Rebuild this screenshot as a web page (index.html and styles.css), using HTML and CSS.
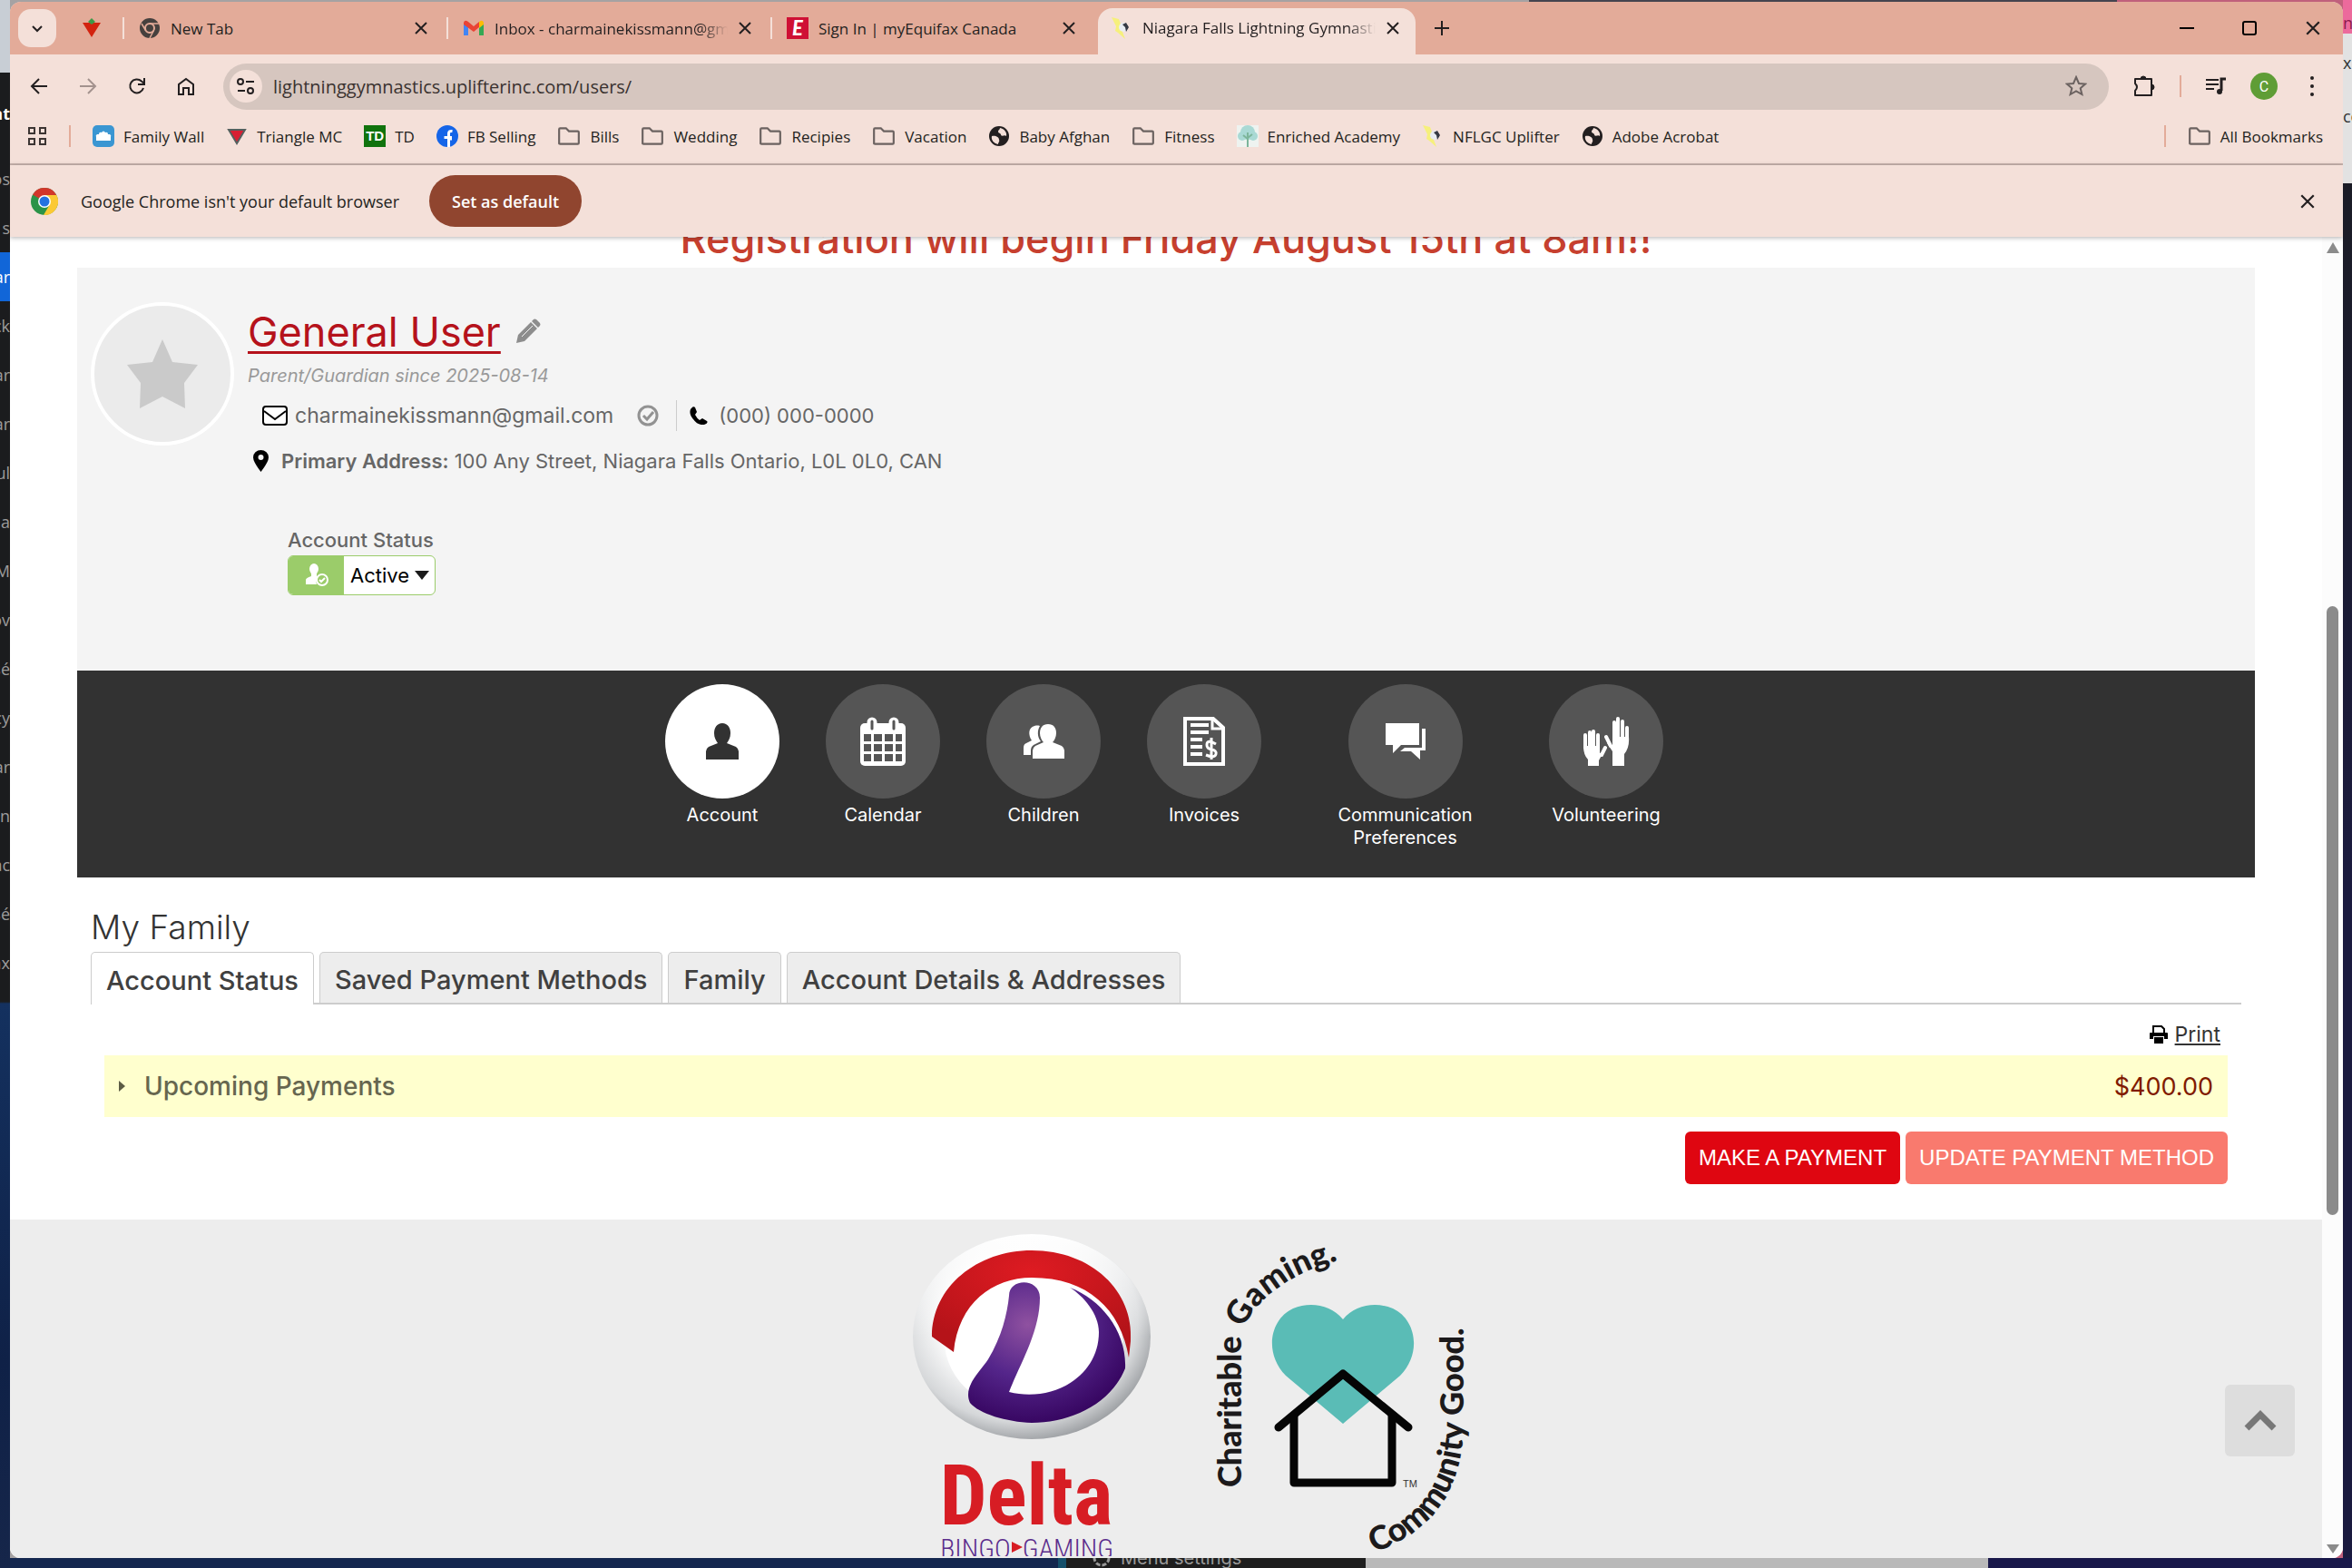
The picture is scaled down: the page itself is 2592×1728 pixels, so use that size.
FILE: index.html
```html
<!DOCTYPE html>
<html lang="en">
<head>
<meta charset="UTF-8" />
<meta name="viewport" content="width=device-width, initial-scale=1" />
<title>Niagara Falls Lightning Gymnastics</title>
<link rel="stylesheet" href="styles.css">
</head>
<body>

<!-- shared icons -->
<svg class="defs" aria-hidden="true">
  <symbol id="x" viewBox="0 0 16 16"><path d="M2 2l12 12M14 2L2 14" fill="none" stroke="currentColor" stroke-width="2"/></symbol>
  <symbol id="folder" viewBox="0 0 24 24"><path d="M2 20V5q0-1 1-1h6l3 3h9q1 0 1 1v11q0 1-1 1H3q-1 0-1-1z" fill="none" stroke="#6b6260" stroke-width="2"/></symbol>
  <symbol id="globe" viewBox="0 0 24 24"><circle cx="12" cy="12" r="11" fill="#231f20"/><path d="M13 3c5 1 8 5 7 9-2-2-4 1-6-1 1-2-3-2-3-4s2-2 2-4zM4 12c4-1 8 1 8 4 1 2-1 3-1 5-5-1-8-5-7-9z" fill="#f4e0d9"/></symbol>
  <symbol id="bolt" viewBox="0 0 24 24"><path d="M1 0l8 2 3 8 3 2-2 4 3 8-8-7-3-2 1-5z" fill="#f6f07c"/><circle cx="14" cy="11" r="5" fill="#e9edf2"/><path d="M13 8l4-2 3 5-3 5-1-5z" fill="#363a44"/></symbol>
</svg>

<div class="behind behind-left" aria-hidden="true">
  <div class="side-head"></div>
  <div class="side-item bold">at</div>
  <div class="side-item">os</div>
  <div class="side-item">s</div>
  <div class="side-item on">ar</div>
  <div class="side-item">ck</div>
  <div class="side-item">ar</div>
  <div class="side-item">ar</div>
  <div class="side-item">ul</div>
  <div class="side-item">a</div>
  <div class="side-item">M</div>
  <div class="side-item">ov</div>
  <div class="side-item">sé</div>
  <div class="side-item">cy</div>
  <div class="side-item">ar</div>
  <div class="side-item">n</div>
  <div class="side-item">ac</div>
  <div class="side-item">sé</div>
  <div class="side-item">ax</div>
</div>
<div class="behind behind-right" aria-hidden="true">
  <div class="peek-pink">nk</div>
  <div class="peek-tab">x</div>
  <div class="peek-url">co</div>
</div>
<div class="behind behind-bottom" aria-hidden="true">
  <div class="menu-peek">
    <svg width="22" height="22" viewBox="0 0 22 22"><circle cx="11" cy="11" r="8" fill="none" stroke="#999" stroke-width="3" stroke-dasharray="5 2"/></svg>
    Menu settings
  </div>
  <div class="grey-peek"></div>
</div>

<div class="window">

  <!-- TAB STRIP -->
  <div class="tab-strip">
    <button class="tab-search" aria-label="Search tabs"><svg width="14" height="14" viewBox="0 0 14 14"><path d="M2 5l5 5 5-5" fill="none" stroke="#231f20" stroke-width="2"/></svg></button>
    <div class="pinned">
      <svg width="24" height="24" viewBox="0 0 24 24"><path d="M2 6h20L12 22z" fill="#d3230f"/><path d="M8 5l4-4 4 4-4 3z" fill="#3c9b48"/></svg>
    </div>
    <div class="tab">
      <svg width="24" height="24" viewBox="0 0 24 24"><circle cx="12" cy="12" r="11" fill="#46403e"/><circle cx="12" cy="12" r="5" fill="none" stroke="#e3ab99" stroke-width="2"/><path d="M12 7h10M7.500 14.500L3 7M16.500 14.500L12 23" stroke="#e3ab99" stroke-width="1.500"/></svg>
      <span class="tab-title">New Tab</span>
      <button class="plain" aria-label="Close tab"><svg width="16" height="16"><use href="#x"/></svg></button>
    </div>
    <div class="tab">
      <svg width="24" height="24" viewBox="0 0 24 24"><path d="M1 20V6l5 4v10z" fill="#4285f4"/><path d="M18 20V10l5-4v14z" fill="#34a853"/><path d="M1 6q1-4 5-1l6 5 6-5v6l-6 5-11-8z" fill="#ea4335"/><path d="M18 5q4-3 5 1v2l-5 4z" fill="#fbbc04"/></svg>
      <span class="tab-title fade">Inbox - charmainekissmann@gmail.com</span>
      <button class="plain" aria-label="Close tab"><svg width="16" height="16"><use href="#x"/></svg></button>
    </div>
    <div class="tab">
      <span class="equifax">E</span>
      <span class="tab-title">Sign In | myEquifax Canada</span>
      <button class="plain" aria-label="Close tab"><svg width="16" height="16"><use href="#x"/></svg></button>
    </div>
    <div class="tab active">
      <svg width="24" height="24"><use href="#bolt"/></svg>
      <span class="tab-title fade">Niagara Falls Lightning Gymnastics</span>
      <button class="plain" aria-label="Close tab"><svg width="16" height="16"><use href="#x"/></svg></button>
    </div>
    <button class="plain new-tab" aria-label="New tab"><svg width="18" height="18" viewBox="0 0 18 18"><path d="M9 1v16M1 9h16" stroke="#231f20" stroke-width="2"/></svg></button>
    <div class="win-buttons">
      <button class="plain" aria-label="Minimize"><svg width="16" height="16" viewBox="0 0 16 16"><path d="M0 8h16" stroke="#000" stroke-width="2"/></svg></button>
      <button class="plain" aria-label="Maximize"><svg width="16" height="16" viewBox="0 0 16 16"><rect x="1" y="1" width="14" height="14" rx="2" fill="none" stroke="#000" stroke-width="2"/></svg></button>
      <button class="plain" aria-label="Close"><svg width="18" height="18"><use href="#x"/></svg></button>
    </div>
  </div>

  <!-- TOOLBAR -->
  <div class="toolbar">
    <div class="nav-buttons">
      <button class="plain" aria-label="Back"><svg width="20" height="20" viewBox="0 0 20 20"><path d="M19 10H2M10 2l-8 8 8 8" fill="none" stroke="#231f20" stroke-width="2"/></svg></button>
      <button class="plain" aria-label="Forward"><svg width="20" height="20" viewBox="0 0 20 20"><path d="M1 10h17M10 2l8 8-8 8" fill="none" stroke="#a3928e" stroke-width="2"/></svg></button>
      <button class="plain" aria-label="Reload"><svg width="20" height="20" viewBox="0 0 20 20"><path d="M17 12a7.500 7.500 0 1 1-2-7.500L18 7" fill="none" stroke="#231f20" stroke-width="2"/><path d="M18 1v7h-7" fill="none" stroke="#231f20" stroke-width="2"/></svg></button>
      <button class="plain" aria-label="Home"><svg width="20" height="20" viewBox="0 0 20 20"><path d="M2 19V8l8-6 8 6v11h-5v-7H7v7z" fill="none" stroke="#231f20" stroke-width="2"/></svg></button>
    </div>
    <div class="omnibox">
      <button class="site-info" aria-label="Site information"><svg width="20" height="20" viewBox="0 0 20 20"><g fill="none" stroke="#231f20" stroke-width="2"><circle cx="4" cy="5" r="3"/><path d="M10 5h9M1 15h8"/><circle cx="15" cy="15" r="3"/></g></svg></button>
      <input class="url" type="text" aria-label="Address" value="lightninggymnastics.uplifterinc.com/users/" />
      <button class="plain" aria-label="Bookmark"><svg width="24" height="24" viewBox="0 0 24 24"><path d="M12 2l3 7 7 .6-5.300 4.700L18.400 21 12 17.300 5.600 21l1.700-6.700L2 9.600 9 9z" fill="none" stroke="#6b6260" stroke-width="2"/></svg></button>
    </div>
    <button class="plain" aria-label="Extensions"><svg width="26" height="26" viewBox="0 0 26 26"><path d="M3 5h18v18H3v-5q4-4 0-8z" fill="none" stroke="#231f20" stroke-width="2" stroke-linejoin="round"/><path d="M9 5a3 3 0 0 1 6 0zM21 11a3 3 0 0 1 0 6z" fill="#231f20" stroke="#231f20"/></svg></button>
    <span class="sep"></span>
    <button class="plain" aria-label="Media controls"><svg width="24" height="24" viewBox="0 0 24 24"><path d="M1 5h14M1 10h14M1 15h9" stroke="#231f20" stroke-width="2"/><path d="M18 17V4h5" fill="none" stroke="#231f20" stroke-width="3"/><circle cx="16" cy="18" r="3" fill="#231f20"/></svg></button>
    <button class="profile-dot" aria-label="Profile">C</button>
    <button class="plain" aria-label="Menu"><svg width="24" height="24" viewBox="0 0 24 24"><g fill="#231f20"><circle cx="12" cy="3" r="2"/><circle cx="12" cy="12" r="2"/><circle cx="12" cy="21" r="2"/></g></svg></button>
  </div>

  <!-- BOOKMARKS -->
  <div class="bookmarks">
    <svg class="apps" width="22" height="22" viewBox="0 0 22 22"><path d="M2 2h6v6H2zM14 2h6v6h-6zM2 14h6v6H2zM14 14h6v6h-6z" fill="none" stroke="#3c3533" stroke-width="2"/></svg>
    <span class="sep"></span>
    <a href="#"><svg width="24" height="24" viewBox="0 0 24 24"><rect width="24" height="24" rx="5" fill="#3a96d2"/><path d="M4 17v-4q-1-2 1-3h2q0-3 3-2 2-3 4 0 3-1 3 2h2q2 1 1 3v4z" fill="#fff"/></svg>Family Wall</a>
    <a href="#"><svg width="24" height="24" viewBox="0 0 24 24"><path d="M3 5h18L12 20z" fill="#d81f33" stroke="#55605f" stroke-width="2"/></svg>Triangle MC</a>
    <a href="#"><span class="td">TD</span>TD</a>
    <a href="#"><svg width="24" height="24" viewBox="0 0 24 24"><circle cx="12" cy="12" r="12" fill="#1565e8"/><path d="M13.500 24v-9H17M8.500 13.500H17M13.500 15V9q0-3 4-2.500" fill="none" stroke="#fff" stroke-width="3"/></svg>FB Selling</a>
    <a href="#"><svg width="26" height="26"><use href="#folder"/></svg>Bills</a>
    <a href="#"><svg width="26" height="26"><use href="#folder"/></svg>Wedding</a>
    <a href="#"><svg width="26" height="26"><use href="#folder"/></svg>Recipies</a>
    <a href="#"><svg width="26" height="26"><use href="#folder"/></svg>Vacation</a>
    <a href="#"><svg width="24" height="24"><use href="#globe"/></svg>Baby Afghan</a>
    <a href="#"><svg width="26" height="26"><use href="#folder"/></svg>Fitness</a>
    <a href="#"><svg width="24" height="24" viewBox="0 0 24 24"><rect width="24" height="24" fill="#eef3f0"/><circle cx="12" cy="8" r="8" fill="#a9d9d4"/><circle cx="6" cy="12" r="5" fill="#a9d9d4"/><circle cx="18" cy="12" r="5" fill="#a9d9d4"/><path d="M12 24V8M12 15l-5-4M12 14l5-4" stroke="#7cb59a" stroke-width="2"/></svg>Enriched Academy</a>
    <a href="#"><svg width="24" height="24"><use href="#bolt"/></svg>NFLGC Uplifter</a>
    <a href="#"><svg width="24" height="24"><use href="#globe"/></svg>Adobe Acrobat</a>
    <span class="sep push"></span>
    <a href="#"><svg width="26" height="26"><use href="#folder"/></svg>All Bookmarks</a>
  </div>

  <!-- DEFAULT BROWSER BAR -->
  <div class="infobar">
    <svg width="30" height="30" viewBox="0 0 30 30"><circle cx="15" cy="15" r="15" fill="#2b9348"/><path d="M15 15L2 7.500A15 15 0 0 1 28 7.500z" fill="#d2362b"/><path d="M15 8h13.300A15 15 0 0 1 14 30l7-12z" fill="#fbc934"/><circle cx="15" cy="15" r="7" fill="#fff"/><circle cx="15" cy="15" r="5.500" fill="#2472e0"/></svg>
    <span>Google Chrome isn't your default browser</span>
    <button class="set-default">Set as default</button>
    <button class="plain push" aria-label="Dismiss"><svg width="18" height="18"><use href="#x"/></svg></button>
  </div>

  <!-- PAGE -->
  <div class="viewport">
    <main class="page">
      <div class="container">
        <h2 class="notice">Registration will begin Friday August 15th at 8am!!</h2>

        <section class="profile">
          <div class="avatar"><svg width="80" height="76" viewBox="0 0 80 76"><path d="M40 0l11 25 28 3-15 20 1 28-25-13-25 13 1-28L1 28l28-3z" fill="#cacaca"/></svg></div>
          <div class="profile-info">
            <div class="name-row">
              <a class="name" href="#">General User</a>
              <svg width="28" height="28" viewBox="0 0 28 28"><path d="M1 27l2-9L17 4l7 7-14 14zM18 3l2-2q1-1 3 0l4 4q1 2 0 3l-2 2z" fill="#8d8d8d"/><path d="M7 20L19 8" stroke="#f4f4f4" stroke-width="1"/></svg>
            </div>
            <div class="since">Parent/Guardian since 2025-08-14</div>
            <div class="contact">
              <svg width="28" height="22" viewBox="0 0 28 22"><rect x="1" y="1" width="26" height="20" rx="3" fill="#fff" stroke="#000" stroke-width="2"/><path d="M2 6l12 9 12-9" fill="none" stroke="#000" stroke-width="2"/></svg>
              <span class="email">charmainekissmann@gmail.com</span>
              <svg class="verified" width="24" height="24" viewBox="0 0 24 24"><circle cx="12" cy="12" r="10" fill="none" stroke="#929292" stroke-width="3"/><path d="M7 12l4 4 7-8" fill="none" stroke="#929292" stroke-width="3"/></svg>
              <span class="phone"><svg width="20" height="20" viewBox="0 0 20 20"><path d="M1 3q3-4 5-2l2 5-2 3q2 4 5 6l3-2 5 3q2 2-3 4Q9 21 4 14-1 8 1 3z" fill="#000"/></svg>(000) 000-0000</span>
            </div>
            <div class="address">
              <svg width="17" height="24" viewBox="0 0 17 24"><path fill-rule="evenodd" d="M8.500 24Q0 13 0 8a8.500 8 0 0 1 17 0q0 5-8.500 16zM8.500 5a3 3 0 1 0 0 6 3 3 0 0 0 0-6z" fill="#000"/></svg>
              <span><b>Primary Address:</b> 100 Any Street, Niagara Falls Ontario, L0L 0L0, CAN</span>
            </div>
            <div class="status">
              <label for="accountStatus">Account Status</label>
              <div class="status-box">
                <span class="status-icon"><svg width="26" height="26" viewBox="0 0 26 26"><ellipse cx="10" cy="6" rx="5" ry="6" fill="#fff"/><path d="M7 9h6v5l3 2q-5 3-3 7H1v-5q0-2 6-4z" fill="#fff"/><circle cx="19" cy="18" r="6" fill="#9bcc6a" stroke="#fff" stroke-width="2"/><path d="M16 18l2 2 4-4" fill="none" stroke="#fff" stroke-width="2"/></svg></span>
                <select id="accountStatus"><option>Active</option></select>
                <svg class="caret" width="16" height="10" viewBox="0 0 16 10"><path d="M0 0h16L8 10z" fill="#1b1b1b"/></svg>
              </div>
            </div>
          </div>
        </section>

        <nav class="user-nav">
          <a class="active" href="#"><span class="disc"><svg width="38" height="40" viewBox="0 0 38 40"><path d="M19 0c6 0 9 5 9 11 0 5-2 8-4 11l10 4q3 2 3 5v9H1v-9q0-3 3-5l10-4c-2-3-4-6-4-11C10 5 13 0 19 0z" fill="currentColor"/></svg></span>Account</a>
          <a href="#"><span class="disc"><svg width="52" height="54" viewBox="0 0 52 54"><rect x="1" y="7" width="50" height="47" rx="5" fill="currentColor"/><path d="M14 6v8M38 6v8" stroke="currentColor" stroke-width="11" stroke-linecap="round"/><path d="M14 5v8M38 5v8" stroke="#555" stroke-width="3" stroke-linecap="round"/><path d="M5 19h8v8H5zm11 0h9v8h-9zm12 0h9v8h-9zm12 0h7v8h-7zM5 30h8v8H5zm11 0h9v8h-9zm12 0h9v8h-9zm12 0h7v8h-7zM5 41h8v8H5zm11 0h9v8h-9zm12 0h9v8h-9zm12 0h7v8h-7z" fill="#555"/></svg></span>Calendar</a>
          <a href="#"><span class="disc"><svg width="46" height="40" viewBox="0 0 46 40"><path d="M13 3c4-1 6 0 6 0-3 5-3 12 1 17l-8 4q-3 2-3 6v5H1v-8q0-4 3-5l6-3C6 13 6 5 13 3z" fill="currentColor"/><path d="M28 1c6 0 9 4 9 10 0 4-2 8-4 10l10 4q3 2 3 5v9H11v-9q0-3 3-5l9-4c-2-2-4-6-4-10 0-6 3-10 9-10z" fill="currentColor"/></svg></span>Children</a>
          <a href="#"><span class="disc"><svg width="46" height="54" viewBox="0 0 46 54"><path d="M2 2h31l11 10v40H2z" fill="none" stroke="currentColor" stroke-width="4"/><path d="M32 2v11h12" fill="none" stroke="currentColor" stroke-width="3"/><path d="M8 9h20M8 17h20M8 25h13M8 33h13M8 41h13" stroke="currentColor" stroke-width="4"/><path d="M36 30q-10-6-10 1 0 4 5 5 6 1 5 5-1 5-11 1M31 23v24" fill="none" stroke="currentColor" stroke-width="3"/></svg></span>Invoices</a>
          <a class="wide" href="#"><span class="disc"><svg width="46" height="40" viewBox="0 0 46 40"><path d="M1 0h37v24H18L9 33v-9H1z" fill="currentColor"/><path d="M41 6h4v24h-6v10L29 31H17l5-4h19z" fill="currentColor"/></svg></span>Communication<br>Preferences</a>
          <a href="#"><span class="disc"><svg width="52" height="54" viewBox="0 0 52 54"><g stroke="currentColor" stroke-width="4" stroke-linecap="round"><path d="M3 34V20M8 33V17M12 33V16M17 34V20M21 42l4-8M35 24V6M39 24V2M44 24V5M49 26V12M31 32l-5-10"/></g><path d="M1 32h18v8l4-1-5 9v6H6v-7q-5-5-5-15zM33 22h18q1 12-5 19v13H33V38l-6-9 6 2z" fill="currentColor"/></svg></span>Volunteering</a>
        </nav>

        <section class="family">
          <h1>My Family</h1>
          <div class="tabs" role="tablist">
            <button class="active" role="tab" aria-selected="true">Account Status</button>
            <button role="tab">Saved Payment Methods</button>
            <button role="tab">Family</button>
            <button role="tab">Account Details &amp; Addresses</button>
          </div>
          <div class="panel">
            <div class="print">
              <svg width="20" height="20" viewBox="0 0 20 20"><path d="M4 8V1h9l3 3v4" fill="#fff" stroke="#000" stroke-width="2"/><path d="M1 8h18q1 0 1 1v6h-4v-3H4v3H0V9q0-1 1-1z" fill="#000"/><rect x="5" y="13" width="10" height="7" fill="#000"/></svg>
              <a href="#">Print</a>
            </div>
            <button class="payments">
              <svg width="7" height="12" viewBox="0 0 7 12"><path d="M0 0l7 6-7 6z" fill="#5c5c44"/></svg>
              <span>Upcoming Payments</span>
              <span class="amount">$400.00</span>
            </button>
            <div class="actions">
              <button class="pay">MAKE A PAYMENT</button>
              <button class="update">UPDATE PAYMENT METHOD</button>
            </div>
          </div>
        </section>
      </div>

      <footer class="sponsors">
        <svg width="275" height="371" viewBox="1000 1346 275 371" role="img" aria-label="Delta Bingo and Gaming">
          <defs>
            <radialGradient id="ball" cx=".45" cy=".42" r=".62"><stop offset=".5" stop-color="#fff"/><stop offset=".8" stop-color="#d5d7d9"/><stop offset="1" stop-color="#8f9296"/></radialGradient>
            <linearGradient id="shade" x1="0" y1="0" x2="0" y2="1"><stop offset="0" stop-color="#fff"/><stop offset=".5" stop-color="#fff" stop-opacity="0"/></linearGradient>
            <radialGradient id="dfill" cx=".38" cy=".3" r=".75"><stop offset="0" stop-color="#8f51a0"/><stop offset=".5" stop-color="#54258a"/><stop offset="1" stop-color="#33025c"/></radialGradient>
            <radialGradient id="rfill" cx=".5" cy=".2" r=".7"><stop offset="0" stop-color="#de1b22"/><stop offset="1" stop-color="#b51319"/></radialGradient>
          </defs>
          <ellipse cx="1138" cy="1475" rx="131" ry="113" fill="url(#ball)"/>
          <ellipse cx="1138" cy="1475" rx="131" ry="113" fill="url(#shade)"/>
          <ellipse cx="1140" cy="1480" rx="98" ry="80" fill="#fff"/>
          <path d="M1028 1475C1028 1420 1078 1380 1138 1380C1204 1380 1251 1425 1247 1480L1245 1498C1236 1445 1200 1410 1138 1410C1095 1410 1057 1438 1052 1492Z" fill="url(#rfill)"/>
          <path d="M1113 1430C1113 1410 1147 1410 1147 1432C1147 1470 1125 1505 1113 1536C1160 1548 1212 1520 1212 1470C1212 1450 1195 1430 1180 1421C1215 1434 1243 1470 1241 1510C1225 1550 1180 1570 1138 1570C1110 1569 1080 1560 1070 1548C1062 1530 1080 1515 1090 1500C1105 1475 1111 1450 1113 1430Z" fill="url(#dfill)"/>
          <text class="delta" x="1132" y="1682" text-anchor="middle">Delta</text>
          <text class="bingo" x="1076" y="1719" text-anchor="middle">BINGO</text>
          <path d="M1116 1701l12 6-12 6z" fill="#d71d24"/>
          <text class="bingo" x="1178" y="1719" text-anchor="middle">GAMING</text>
        </svg>
        <svg width="310" height="371" viewBox="1325 1346 310 371" role="img" aria-label="Charitable Gaming. Community Good.">
          <path id="arcLeft" d="M1369 1641V1480C1371 1445 1418 1402 1490 1388" fill="none"/>
          <path id="arcRight" d="M1515 1713C1582 1690 1614 1640 1614 1570V1440" fill="none"/>
          <path d="M1481 1571L1418 1518C1394 1494 1400 1456 1426 1444C1445 1436 1468 1440 1481 1456C1494 1440 1517 1436 1536 1444C1562 1456 1568 1494 1544 1518Z" fill="#5abcb6"/>
          <path d="M1410 1575L1481 1516L1553 1575" fill="none" stroke="#050505" stroke-width="9" stroke-linecap="round" stroke-linejoin="round"/>
          <path d="M1427 1562V1636H1535V1562" fill="none" stroke="#050505" stroke-width="9" stroke-linejoin="round"/>
          <text class="tm" x="1547" y="1641">TM</text>
          <text class="arc"><textPath href="#arcLeft">Charitable Gaming.</textPath></text>
          <text class="arc"><textPath href="#arcRight">Community Good.</textPath></text>
        </svg>
      </footer>
      <button class="to-top" aria-label="Back to top"><svg width="36" height="24" viewBox="0 0 36 24"><path d="M3 20L18 5l15 15" fill="none" stroke="#777" stroke-width="7"/></svg></button>
    </main>
    <div class="scrollbar">
      <svg width="14" height="12" viewBox="0 0 14 12"><path d="M7 0l7 12H0z" fill="#8b8b8b"/></svg>
      <div class="track"><div class="thumb"></div></div>
      <svg width="14" height="10" viewBox="0 0 14 10"><path d="M0 0h14L7 10z" fill="#8b8b8b"/></svg>
    </div>
  </div>
</div>

</body>
</html>
```
FILE: styles.css
```css
:root {
  --strip: #e3ab99;
  --bar: #f4e0d9;
  --ink: #231f20;
}
* {
  box-sizing: border-box;
  margin: 0;
  padding: 0;
}
body {
  height: 100vh;
  overflow: hidden;
  display: grid;
  grid-template-columns: 11px 1fr 10px;
  grid-template-rows: 2px 1fr 11px;
  background: linear-gradient(to right, #a5a2a3 65%, #45444f 65%, #45444f 90%, #c0607c 90%);
  font-family: Inter, "Liberation Sans", sans-serif;
}
button, input, select {
  font: inherit;
  border: none;
  background: none;
}
button {
  cursor: pointer;
}
svg {
  display: block;
  flex-shrink: 0;
}
.defs {
  position: absolute;
  width: 0;
  height: 0;
}
.push {
  margin-left: auto;
}

/* WINDOWS BEHIND */
.behind {
  overflow: hidden;
}
.behind-left {
  grid-row: 1 / 4;
  grid-column: 1;
  background: linear-gradient(to bottom, #1b1c1e 1104px, #14315f 1106px, #0f2147 1500px, #16264a);
  color: #9b9b9b;
  font: 18px "Open Sans", sans-serif;
}
.side-head {
  height: 80px;
  background: #c8ced5;
}
.side-item {
  height: 54px;
  display: flex;
  align-items: center;
  justify-content: flex-end;
}
.side-item.bold {
  height: 90px;
  color: #fff;
  font-weight: 700;
}
.side-item.on {
  background: #1166d8;
  color: #fff;
}
.behind-right {
  grid-row: 1 / 3;
  grid-column: 3;
  background: linear-gradient(to bottom, #ec6a9c 37px, #e2e2e2 37px, #e2e2e2 202px, #1b1c26 202px, #1a1a3f 1000px);
  color: #333;
  font: 18px "Open Sans", sans-serif;
}
.peek-pink {
  height: 48px;
  line-height: 50px;
  color: #8c1c4c;
}
.peek-tab {
  height: 48px;
  line-height: 42px;
}
.peek-url {
  height: 68px;
  line-height: 64px;
}
.behind-bottom {
  grid-row: 3;
  grid-column: 2 / 4;
  display: flex;
  padding-left: 1164px;
  background: linear-gradient(to right, #14274f 1155px, #15506b 1155px, #15506b 1164px, #19184a 1164px);
}
.menu-peek {
  width: 330px;
  height: 11px;
  padding-left: 28px;
  display: flex;
  align-items: flex-end;
  gap: 10px;
  background: #1e1e1e;
  color: #999;
  font-size: 20px;
  line-height: 22px;
}
.grey-peek {
  width: 686px;
  background: #b9b9b9;
}

/* BROWSER WINDOW */
.window {
  grid-row: 2;
  grid-column: 2;
  min-width: 0;
  min-height: 0;
  display: flex;
  flex-direction: column;
  background: var(--bar);
  border-radius: 12px;
  overflow: hidden;
  color: var(--ink);
  font-family: "Open Sans", "Noto Sans", sans-serif;
  font-size: 18px;
}
.plain {
  color: var(--ink);
  display: flex;
  align-items: center;
  justify-content: center;
}
.tab-strip {
  height: 58px;
  display: flex;
  align-items: center;
  padding: 0 24px 0 9px;
  background: var(--strip);
}
.tab-search {
  width: 42px;
  height: 42px;
  border-radius: 14px;
  background: var(--bar);
  display: flex;
  align-items: center;
  justify-content: center;
}
.pinned {
  width: 73px;
  padding-left: 27px;
}
.tab {
  width: 357px;
  height: 24px;
  display: flex;
  align-items: center;
  gap: 11px;
  padding: 0 20px 0 16px;
  border-left: 2px solid var(--bar);
}
.tab.active {
  width: 350px;
  height: 51px;
  align-self: flex-end;
  margin-left: 4px;
  padding: 0 17px 8px 14px;
  border: none;
  border-radius: 16px 16px 0 0;
  background: var(--bar);
}
.tab-title {
  flex: 1;
  min-width: 0;
  overflow: hidden;
  white-space: nowrap;
  font-size: 17px;
}
.fade {
  mask-image: linear-gradient(to right, #000 88%, transparent);
}
.equifax, .td {
  width: 24px;
  height: 24px;
  background: #cf1034;
  color: #fff;
  font: italic 900 22px/24px Lato, sans-serif;
  text-align: center;
}
.td {
  background: #10730d;
  font: 700 15px/24px "Liberation Sans", sans-serif;
}
.new-tab {
  margin-left: 20px;
}
.win-buttons {
  display: flex;
  gap: 53px;
  margin-left: auto;
}
.toolbar {
  height: 70px;
  display: flex;
  align-items: center;
  gap: 26px;
  padding: 0 22px;
}
.nav-buttons {
  display: flex;
  gap: 34px;
  padding-right: 5px;
}
.omnibox {
  flex: 1;
  height: 51px;
  display: flex;
  align-items: center;
  gap: 12px;
  padding: 0 24px 0 7px;
  border-radius: 26px;
  background: #d6c6bf;
}
.site-info {
  width: 36px;
  height: 36px;
  border-radius: 50%;
  background: var(--bar);
  display: flex;
  align-items: center;
  justify-content: center;
}
.url {
  flex: 1;
  font-size: 20px;
  color: #3a3230;
  outline: none;
}
.sep {
  width: 2px;
  height: 24px;
  background: var(--strip);
}
.profile-dot {
  width: 30px;
  height: 30px;
  border-radius: 50%;
  background: #5f9d36;
  color: #fff;
  font: 16px Roboto, sans-serif;
}
.bookmarks {
  height: 52px;
  display: flex;
  align-items: center;
  gap: 24px;
  padding: 0 22px 10px 19px;
  border-bottom: 2px solid #c9b4ae;
  font-size: 17px;
}
.bookmarks a {
  display: flex;
  align-items: center;
  gap: 10px;
  color: inherit;
  text-decoration: none;
  white-space: nowrap;
}
.infobar {
  height: 79px;
  display: flex;
  align-items: center;
  gap: 25px;
  padding: 0 30px 0 23px;
  box-shadow: 0 1px 5px rgba(0,0,0,0.3);
  z-index: 1;
}
.set-default {
  height: 57px;
  margin-left: 8px;
  padding: 0 25px;
  border-radius: 29px;
  background: #90452f;
  color: #fff;
  font-weight: 600;
}

/* PAGE */
.viewport {
  flex: 1;
  min-height: 0;
  display: flex;
  background: #fff;
  font-family: Inter, "Liberation Sans", sans-serif;
}
.page {
  position: relative;
  flex: 1;
  min-width: 0;
  display: flex;
  flex-direction: column;
}
.container {
  padding: 0 74px 39px;
}
.notice {
  height: 34px;
  padding-bottom: 6px;
  display: flex;
  align-items: flex-end;
  justify-content: center;
  overflow: hidden;
  color: #c7402f;
  font-size: 45px;
  font-weight: 500;
  line-height: 52px;
  white-space: nowrap;
}
.profile {
  height: 444px;
  display: flex;
  gap: 15px;
  padding: 38px 15px;
  background: #f4f4f4;
  color: #666;
  font-size: 22px;
}
.avatar {
  width: 158px;
  height: 158px;
  border: 4px solid #fff;
  border-radius: 50%;
  background: #ebebeb;
  display: flex;
  align-items: center;
  justify-content: center;
}
.name-row {
  display: flex;
  align-items: center;
  gap: 16px;
  height: 64px;
}
.name {
  color: #b5121b;
  font-size: 45px;
  text-decoration-thickness: 3px;
  text-underline-offset: 5px;
}
.since {
  height: 34px;
  line-height: 34px;
  color: #999;
  font-size: 20px;
  font-style: italic;
}
.contact {
  display: flex;
  align-items: center;
  gap: 8px;
  height: 54px;
  padding-left: 16px;
}
.email {
  font-size: 23px;
}
.verified {
  margin: 0 11px 0 18px;
}
.phone {
  display: flex;
  align-items: center;
  gap: 12px;
  height: 34px;
  padding-left: 14px;
  border-left: 1px solid #ccc;
}
.address {
  display: flex;
  align-items: center;
  gap: 14px;
  height: 46px;
  padding-left: 6px;
}
.address b {
  font-weight: 600;
}
.status {
  padding: 47px 0 0 44px;
}
.status label {
  display: block;
  height: 34px;
  line-height: 34px;
  font-weight: 500;
}
.status-box {
  position: relative;
  display: flex;
  width: 163px;
  height: 44px;
  border: 1px solid #9bcc6a;
  border-radius: 6px;
  background: #fff;
  overflow: hidden;
}
.status-icon {
  width: 61px;
  display: flex;
  align-items: center;
  justify-content: center;
  background: #9bcc6a;
}
.status-box select {
  flex: 1;
  padding-left: 7px;
  appearance: none;
  color: #000;
}
.caret {
  position: absolute;
  right: 6px;
  top: 16px;
  pointer-events: none;
}
.user-nav {
  height: 228px;
  display: flex;
  justify-content: center;
  padding: 15px 4px 0 0;
  background: #323232;
}
.user-nav a {
  width: 177px;
  display: flex;
  flex-direction: column;
  align-items: center;
  color: #fff;
  font-size: 20px;
  line-height: 25px;
  text-align: center;
  text-decoration: none;
}
.user-nav .wide {
  width: 266px;
}
.disc {
  width: 126px;
  height: 126px;
  margin-bottom: 6px;
  border-radius: 50%;
  display: flex;
  align-items: center;
  justify-content: center;
  background: #555;
}
.active .disc {
  background: #fff;
  color: #323232;
}
.family {
  padding: 32px 15px 0;
}
.family h1 {
  height: 50px;
  line-height: 46px;
  font-size: 37px;
  font-weight: 300;
  color: #333;
}
.tabs {
  display: flex;
  gap: 6px;
  border-bottom: 2px solid #ccc;
}
.tabs button {
  height: 56px;
  padding: 4px 16px 0;
  border: 1px solid #ccc;
  border-bottom: none;
  border-radius: 5px 5px 0 0;
  background: #ededed;
  color: #404040;
  font-size: 29px;
  font-weight: 500;
}
.tabs .active {
  height: 58px;
  margin-bottom: -2px;
  background: #fff;
}
.panel {
  padding: 10px 15px 0;
}
.print {
  display: flex;
  align-items: center;
  justify-content: flex-end;
  gap: 8px;
  height: 46px;
  padding-right: 8px;
  font-size: 23px;
}
.print a {
  color: #333;
}
.payments {
  width: 100%;
  height: 68px;
  display: flex;
  align-items: center;
  gap: 21px;
  padding: 0 16px;
  background: #ffffce;
  color: #66664f;
  font-size: 28px;
  font-weight: 500;
}
.amount {
  margin-left: auto;
  color: #801a00;
  font-size: 27px;
  font-weight: 400;
}
.actions {
  display: flex;
  justify-content: flex-end;
  gap: 6px;
  padding-top: 16px;
}
.actions button {
  height: 58px;
  padding: 0 15px;
  border-radius: 6px;
  background: #df0611;
  color: #fff;
  font: 24px "Liberation Sans", sans-serif;
}
.actions .update {
  background: #f97a6e;
}
.sponsors {
  flex: 1;
  min-height: 0;
  display: flex;
  justify-content: center;
  gap: 50px;
  padding-left: 63px;
  background: #ededed;
  overflow: hidden;
}
.delta {
  fill: #d71d24;
  font: 700 92px "Roboto Condensed", "Liberation Sans Narrow", "Liberation Sans", sans-serif;
}
.bingo {
  fill: #5b2d8c;
  font: 300 30px "Roboto Condensed", "Liberation Sans Narrow", Roboto, sans-serif;
}
.arc {
  fill: #1c1a1b;
  font: 900 36px Lato, sans-serif;
}
.tm {
  fill: #333;
  font: 11px "Liberation Sans", sans-serif;
}
.to-top {
  position: absolute;
  right: 30px;
  bottom: 112px;
  width: 77px;
  height: 79px;
  border-radius: 6px;
  background: #ddd;
  display: flex;
  align-items: center;
  justify-content: center;
}

/* SCROLLBAR */
.scrollbar {
  width: 23px;
  display: flex;
  flex-direction: column;
  align-items: center;
  padding: 6px 0 5px;
  background: #fcfcfc;
}
.track {
  flex: 1;
  display: flex;
  flex-direction: column;
  justify-content: center;
  padding-top: 26px;
}
.thumb {
  width: 13px;
  height: 48%;
  border-radius: 7px;
  background: #8b8b8b;
}
```
